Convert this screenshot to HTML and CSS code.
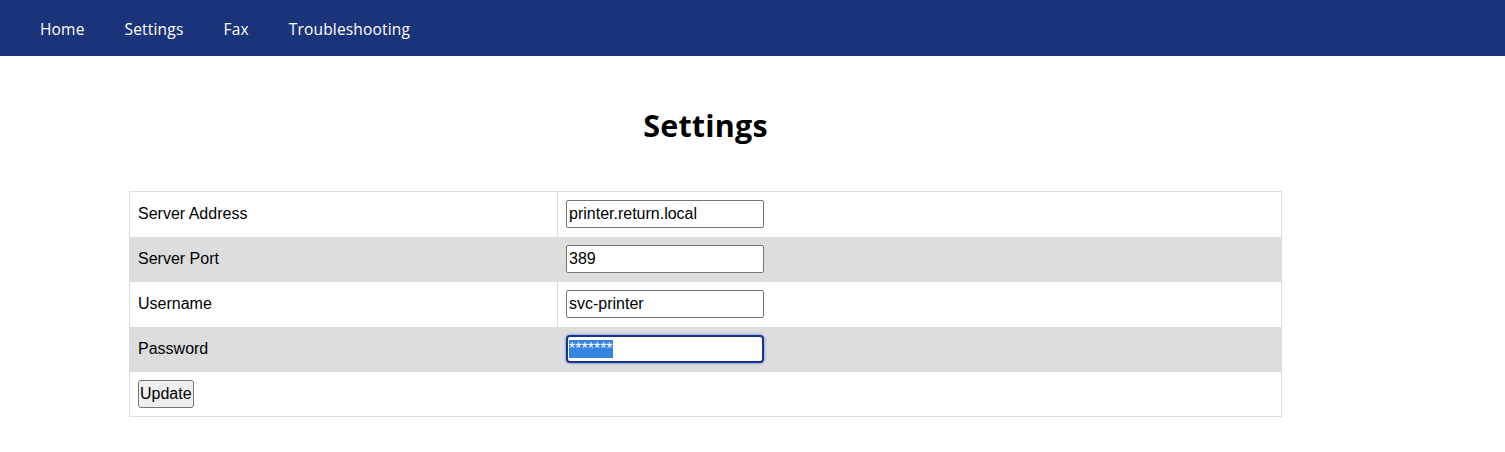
FILE: index.html
```html
<!DOCTYPE html>
<html lang="en">
<head>
<meta charset="utf-8">
<title>Settings</title>
<link rel="stylesheet" href="styles.css">
</head>
<body>
<nav class="topnav">
  <ul class="nav-list">
    <li class="nav-item"><a href="#">Home</a></li>
    <li class="nav-item"><a href="#">Settings</a></li>
    <li class="nav-item"><a href="#">Fax</a></li>
    <li class="nav-item"><a href="#">Troubleshooting</a></li>
  </ul>
</nav>
<main class="page">
  <h1 class="title">Settings</h1>
  <form class="settings-form">
    <table class="settings">
      <tr>
        <td class="label">Server Address</td>
        <td class="field"><input class="text" type="text" value="printer.return.local"></td>
      </tr>
      <tr class="alt">
        <td class="label">Server Port</td>
        <td class="field"><input class="text" type="text" value="389"></td>
      </tr>
      <tr>
        <td class="label">Username</td>
        <td class="field"><input class="text" type="text" value="svc-printer"></td>
      </tr>
      <tr class="alt">
        <td class="label">Password</td>
        <td class="field"><input id="pw" class="text active" type="text" value="*******"></td>
      </tr>
      <tr>
        <td class="last" colspan="2"><button class="btn" type="button">Update</button></td>
      </tr>
    </table>
  </form>
</main>
<script src="script.js"></script>
</body>
</html>
```
FILE: styles.css
```css
html, body {
  margin: 0;
  padding: 0;
  background: #ffffff;
}
body {
  font-family: "Liberation Sans", Arial, sans-serif;
  color: #000;
}
.topnav {
  background: #1a347a;
  height: 56px;
  display: flex;
  align-items: center;
}
.nav-list {
  list-style: none;
  margin: 0;
  padding: 2px 0 0 20px;
  display: flex;
}
.nav-item a {
  display: block;
  padding: 0 20px;
  color: #ffffff;
  text-decoration: none;
  font-family: "Open Sans", "Noto Sans", sans-serif;
  font-size: 15.5px;
  letter-spacing: 0.18px;
  line-height: 20px;
}
.page {
  width: 1153px;
  margin-left: 129px;
  padding-top: 50px;
}
.title {
  margin: 0 0 47px;
  text-align: center;
  font-family: "Open Sans", "Noto Sans", sans-serif;
  font-weight: 700;
  font-size: 30.5px;
  letter-spacing: 0.2px;
  line-height: 38px;
}
.settings-form {
  margin: 0;
}
.settings {
  width: 100%;
  border-collapse: collapse;
  border: 1px solid #dddddd;
  font-size: 16px;
}
.settings td {
  height: 45px;
  box-sizing: border-box;
  padding: 0 8px;
  vertical-align: middle;
}
.settings td.label {
  width: 428px;
  border-right: 1px solid #dddddd;
}
.settings tr.alt td {
  background: #dddddd;
}
.text {
  box-sizing: border-box;
  width: 198px;
  height: 28px;
  margin: 0;
  padding: 1px 2px;
  border: 1px solid #767676;
  border-radius: 2px;
  font-family: "Liberation Sans", Arial, sans-serif;
  font-size: 16px;
  color: #000;
  background: #fff;
}
.text.active,
.text:focus {
  outline: none;
  border: 2px solid #17338a;
  border-radius: 4px;
  padding: 0 1px;
  box-shadow: 0 0 2px 1px rgba(70, 110, 220, 0.45);
}
.text::selection {
  background: #3584e4;
  color: #ffffff;
}
.btn {
  box-sizing: border-box;
  height: 28px;
  padding: 1px 1px;
  margin: 0;
  font-family: "Liberation Sans", Arial, sans-serif;
  font-size: 16px;
  color: #000;
  background: #efefef;
  border: 1px solid #767676;
  border-radius: 3px;
}
```
FILE: script.js
```js
var pw = document.getElementById('pw');
pw.focus();
pw.setSelectionRange(0, pw.value.length);
```
